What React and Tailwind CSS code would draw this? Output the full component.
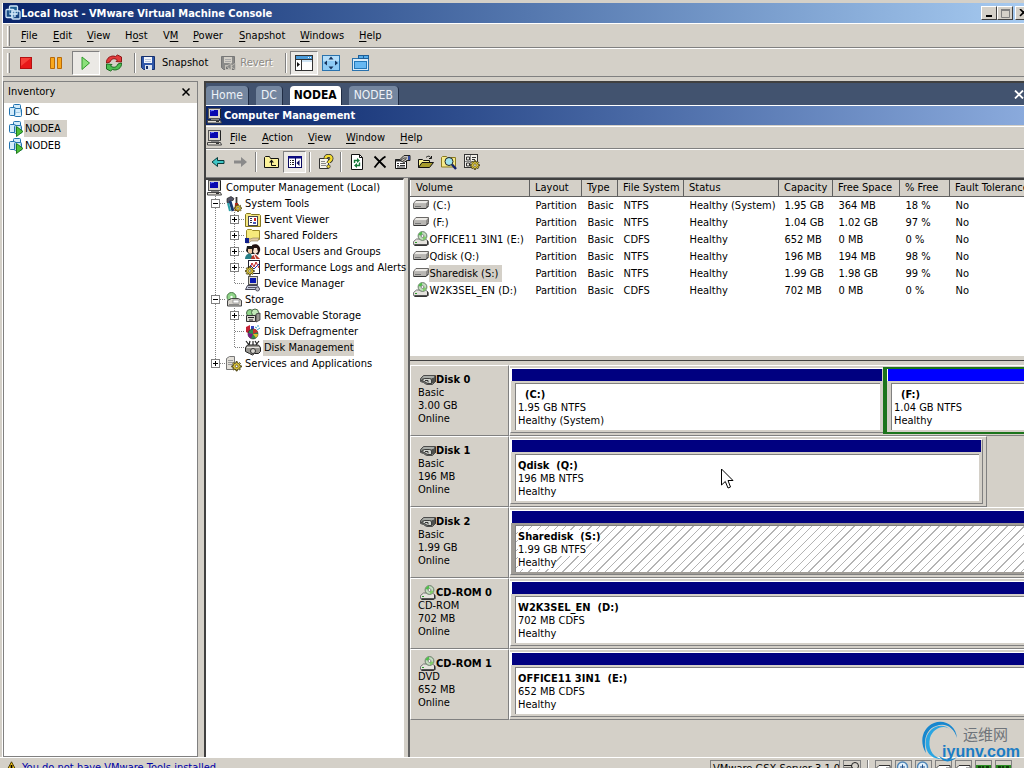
import React from "react";

const underline = (label, index) => (
  <>
    {label.slice(0, index)}
    <span className="underline underline-offset-2">{label[index]}</span>
    {label.slice(index + 1)}
  </>
);

function MenuBar({ items, className }) {
  return (
    <nav className={"flex items-center " + className}>
      {items.map(([label, index, width]) => (
        <button key={label} type="button" className={"whitespace-nowrap text-left " + width}>
          {underline(label, index)}
        </button>
      ))}
    </nav>
  );
}

function Icon({ children, w = 16, h = 16, className = "" }) {
  return (
    <svg width={w} height={h} viewBox={`0 0 ${w} ${h}`} className={"shrink-0 " + className} aria-hidden="true">
      {children}
    </svg>
  );
}

/* ---------- icons ---------- */

const VmLogo = () => (
  <Icon>
    <g fill="#1f5f93" stroke="#cfe6f8" strokeWidth="1.3">
      <rect x="4.5" y="1" width="8" height="8" rx="1" />
      <rect x="1" y="4.5" width="8" height="8" rx="1" fillOpacity=".7" />
      <rect x="7" y="6" width="8" height="8" rx="1" fillOpacity=".5" />
      <path d="M4.5 9h8M7 4.500v8M10 6v6" fill="none" />
    </g>
  </Icon>
);

const VmIcon = ({ on }) => (
  <Icon>
    <g fill="#d4ecfb" stroke="#2273b0">
      <rect x="5.500" y=".5" width="7" height="8" rx="1" />
      <rect x="1.500" y="3.500" width="6" height="8" rx="1" />
      <rect x="6.500" y="4.500" width="7" height="8" rx="1" fillOpacity=".7" />
    </g>
    {on && <path d="M8.500 5.500L15 10.500L8.500 15.500Z" fill="#4fc03a" stroke="#1e7a1a" />}
  </Icon>
);

const Computer = () => (
  <Icon>
    <rect x="1.500" y=".5" width="12" height="10" fill="#d8d4cc" stroke="#555" />
    <rect x="3" y="2" width="8" height="6" fill="#0808b0" />
    <path d="M4 3.500V2.500h3" stroke="#6d7cff" fill="none" />
    <path d="M13.500 1v9" stroke="#222" />
    <path d="M4 11h8v1H4z" fill="#888" />
    <path d="M.5 12.500h13l1 2.500H.5z" fill="#e4e0d8" stroke="#444" />
    <path d="M9 13.500h3" stroke="#333" />
  </Icon>
);

const Floppy = ({ gray }) => (
  <Icon>
    <path d="M1.500 1.500h13v13h-11l-2-2z" fill={gray ? "#8a8a88" : "#2f56a8"} stroke={gray ? "#777" : "#16306c"} />
    <rect x="4" y="2" width="8" height="6" fill={gray ? "#d4d0c8" : "#f2f5fa"} />
    <path d="M5 4.500h6M5 6.500h6" stroke={gray ? "#aaa" : "#b9c6dd"} />
    <rect x="5" y="10" width="7" height="5" fill={gray ? "#c4c0b8" : "#dfe5ef"} />
    <rect x="6" y="11" width="2" height="3" fill={gray ? "#777" : "#16306c"} />
    {gray && <path d="M11 8v7L6.500 11.500zM15.500 8v7L11 11.500z" fill="#8c8c8a" stroke="#d4d0c8" strokeWidth=".6" />}
  </Icon>
);

const Reset = () => (
  <Icon w={18} h={18}>
    <path d="M1.500 9C1 4 6 .8 10.500 2.500L12.500 1L16.500 3v5l-5.500-.5L12.500 6C9 3.500 6 5 5 8Z" fill="#e23a3a" stroke="#8e1515" />
    <path d="M16.500 9C17 14 12 17.200 7.500 15.500L5.500 17L1.500 15v-5l5.500.5L5.500 12C9 14.500 12 13 13 10Z" fill="#4cbf52" stroke="#1c6b21" />
  </Icon>
);

const Sidebar = () => (
  <Icon w={18} h={18}>
    <rect x=".5" y="1.500" width="17" height="15" fill="#fff" stroke="#333" />
    <path d="M1 2h16v3H1z" fill="#4a9cdb" />
    <path d="M1 5.500h16M6.500 5.500v11" stroke="#333" />
    <path d="M7 6h10v2H7z" fill="#cfe4f4" />
    <path d="M2 8v5l3-2.500z" fill="#111" />
    <path d="M13 3.500h1M15 3.500h1" stroke="#fff" />
  </Icon>
);

const Expand = () => (
  <Icon w={18} h={16}>
    <rect x=".5" y=".5" width="17" height="15" fill="#8ecbf5" stroke="#2a72ad" />
    <path d="M1 1h16v5H1z" fill="#b5defa" />
    <path d="M9 1.500l2.500 3h-5zM9 14.500l2.500-3h-5zM2 8l3-2.500v5zM16 8l-3-2.500v5z" fill="#16325c" />
  </Icon>
);

const QuickSwitch = () => (
  <Icon w={18} h={16}>
    <rect x=".5" y="3.500" width="16" height="12" fill="#d7ebfa" stroke="#2a72ad" />
    <rect x="6.500" y=".5" width="5" height="3" fill="#55acea" stroke="#1e5f98" />
    <rect x="11.500" y=".5" width="5" height="3" fill="#55acea" stroke="#1e5f98" />
    <rect x="2.500" y="6.500" width="12" height="7" fill="#66b8f2" stroke="#2478b8" />
  </Icon>
);

const Arrow = ({ right }) => (
  <Icon>
    {right ? (
      <path d="M1 6.500h7V3l6 5l-6 5V9.500H1z" fill="#8a8a8a" />
    ) : (
      <path d="M14 6.500H7.500V3.500L2 8l5.500 4.500V9.500H14z" fill="#3fc6c6" stroke="#0b3b3b" />
    )}
  </Icon>
);

const FolderUp = () => (
  <Icon>
    <path d="M.5 13.500V3.500l1-1h4l1 2h8v9z" fill="#fdf39a" stroke="#111" />
    <path d="M5 8.500L7.500 5.500L10 8.500z" fill="#111" />
    <path d="M7.500 8v3.500H12" fill="none" stroke="#111" />
  </Icon>
);

const TreePane = () => (
  <Icon>
    <rect x="1.500" y="2.500" width="13" height="11" fill="#fff" stroke="#0a0a60" />
    <path d="M1 2h14v2.500H1z" fill="#0a0a80" />
    <path d="M8.500 4v9" stroke="#0a0a60" />
    <path d="M3 6.500h1M5 6.500h2M3 8.500h1M5 8.500h2M3 10.500h1M5 10.500h2" stroke="#222" />
    <path d="M12.500 6v6L9.500 9z" fill="#0a0a60" />
  </Icon>
);

const HelpDoc = () => (
  <Icon>
    <path d="M1.500 4.500h9v10h-9z" fill="#f6f4ec" stroke="#333" />
    <path d="M3 7.500h4M3 9.500h5M3 11.500h5" stroke="#888" />
    <path d="M7.500 4.500C7.500 1 13.500 1 13.500 4.500C13.500 7 10.500 7 10.500 9" fill="none" stroke="#333" strokeWidth="4" />
    <path d="M7.500 4.500C7.500 1 13.500 1 13.500 4.500C13.500 7 10.500 7 10.500 9" fill="none" stroke="#f4dc30" strokeWidth="2.400" />
    <circle cx="10.500" cy="12.500" r="1.700" fill="#f4dc30" stroke="#333" strokeWidth=".8" />
  </Icon>
);

const RefreshDoc = () => (
  <Icon>
    <path d="M2.500 .5h8l3 3v12h-11z" fill="#fff" stroke="#111" />
    <path d="M10.500 .5v3h3" fill="none" stroke="#111" />
    <path d="M5.500 9V6.500h3" fill="none" stroke="#167a3a" strokeWidth="1.400" />
    <path d="M8 4v5l3-2.500z" fill="#167a3a" />
    <path d="M10.500 8.500v3H8" fill="none" stroke="#167a3a" strokeWidth="1.400" />
    <path d="M8 9v5l-3-2.500z" fill="#167a3a" />
  </Icon>
);

const DeleteX = () => (
  <Icon>
    <path d="M2.500 2.500L13.500 13.500M13.500 2.500C9 5 6 9 2.500 13.500" stroke="#000" strokeWidth="1.800" fill="none" />
  </Icon>
);

const Properties = () => (
  <Icon>
    <path d="M.5 5.500h11v9H.5z" fill="#fff" stroke="#111" />
    <path d="M.5 5.500h11v2H.5z" fill="#333" />
    <path d="M2 9.500h2M5 9.500h5M2 11.500h2M5 11.500h5M2 13h8" stroke="#333" />
    <path d="M4.500 6l4.500-4.500h6v5h-3l-3 2z" fill="#c9c5bd" stroke="#222" />
    <path d="M6 6l3-2h3M8 7l3-2" stroke="#222" fill="none" strokeWidth=".8" />
    <path d="M13 2h2v4h-2z" fill="#334a9c" />
  </Icon>
);

const OpenFolder = () => (
  <Icon>
    <path d="M.5 13.500V5.500h4l1 1h6v2" fill="#f7ef90" stroke="#111" />
    <path d="M.5 13.500L4 8.500h11.500l-4 5z" fill="#a69b2c" stroke="#111" />
    <path d="M8 3.500c2-2 4-1.500 5 .5M13.500 2v2.500H11" stroke="#111" fill="none" />
  </Icon>
);

const FindFolder = () => (
  <Icon>
    <path d="M.5 13V3.500l1-1h4l1 1h8V13z" fill="#f5e98a" stroke="#8a7a20" />
    <circle cx="8" cy="7.500" r="4" fill="#9fe3ee" stroke="#222" />
    <path d="M11 10.500l4 4.500" stroke="#10206a" strokeWidth="2.400" />
  </Icon>
);

const gearPath = "M7 1h2v2l2 .8L12.500 2.500L14 4l-1.300 1.500l.8 2h2v2h-2l-.8 1.700L14 12.500L12.500 14L11 12.700L9 13.500v2H7v-2l-2-.8L3.500 14L2 12.500l1.300-1.300L2.500 9.500h-2v-2h2l.8-2L2 4l1.500-1.500L5 3.800L7 3z";
const Gear = () => (
  <>
    <path d={gearPath} fill="#d8c23a" stroke="#3a3208" strokeWidth="1.400" />
    <circle cx="8" cy="8.300" r="2" fill="#fff" stroke="#3a3208" />
  </>
);

const Settings = () => (
  <Icon>
    <rect x=".5" y=".5" width="13" height="13" fill="#f2f0ea" stroke="#333" />
    <path d="M2.500 3v3h3V3zM2.500 9v3h3V9zM8 3.500h4M8 5.500h3" fill="none" stroke="#333" />
    <path d="M6.500 1v12M1 7.500h12" stroke="#888" />
    <g transform="translate(6 6) scale(.62)"><Gear /></g>
  </Icon>
);

const SystemTools = () => (
  <Icon>
    <path d="M1 2.500l4-2 3 2-1 2H4v2H1z" fill="#556" stroke="#222" strokeWidth=".7" />
    <path d="M4 5l3 10" stroke="#16386f" strokeWidth="2.800" />
    <path d="M10.500 1v7" stroke="#333" strokeWidth="1.800" />
    <path d="M9 7h3l1 8H8.500z" fill="#b02818" />
    <path d="M2 7l2 8" stroke="#2aa0a8" strokeWidth="2" />
    <g transform="translate(8 8) scale(.5)"><Gear /></g>
  </Icon>
);

const EventViewer = () => (
  <Icon>
    <path d="M.5 14.500V2.500l1-1h4l1 1h8l1 1v11z" fill="#f5e882" stroke="#85771f" />
    <rect x="3.500" y="4.500" width="9" height="9" fill="#fff" stroke="#445" />
    <path d="M5 6.500h2M5 8.500h2M5 10.500h2" stroke="#335" />
    <path d="M9 6h2v3H9z" fill="#cc2222" /><path d="M8 10h3v2H8z" fill="#4558c0" />
  </Icon>
);

const SharedFolders = () => (
  <Icon>
    <path d="M1.500 11.500V2.500l1-1h4l1 1h7v9z" fill="#f6ea7c" stroke="#9a8a28" />
    <path d="M1 10l4 1 3-1h6l-1 3H6l-2 2H1z" fill="#e0c9a2" stroke="#86785a" strokeWidth=".6" />
    <rect x="0" y="10" width="4" height="5" fill="#10208c" />
  </Icon>
);

const Users = () => (
  <Icon>
    <path d="M2 2h6l2 3v5H4L1 7z" fill="#1b1b1b" />
    <path d="M3 5h4v4l-2 1-2-2z" fill="#f0c8a0" />
    <path d="M7 1c5-2 9 1 8 6l-2 4-5-3z" fill="#201010" />
    <path d="M9 4h3l1 4-3 2-2-2z" fill="#f7e4d0" />
    <path d="M0 15c0-4 3-6 6-5l2 5z" fill="#267e86" />
    <path d="M6 15c0-3 3-5 5-4l4 4z" fill="#b83828" />
    <path d="M9 11l2 4" stroke="#fff" />
  </Icon>
);

const PerfLogs = () => (
  <Icon>
    <rect x="3.500" y=".5" width="11" height="13" fill="#fff" stroke="#223" />
    <path d="M5 8l2-5 2 4 2-5 3 6" stroke="#c02020" fill="none" />
    <path d="M5 5l4 4 5-5" stroke="#2030b0" fill="none" />
    <g transform="translate(0 6) scale(.6)"><Gear /></g>
  </Icon>
);

const DeviceMgr = () => (
  <Icon>
    <rect x="3.500" y=".5" width="9" height="8" fill="#dcd8d0" stroke="#555" />
    <rect x="5" y="2" width="6" height="5" fill="#0a18b0" />
    <path d="M2.500 9.500h10l2 4H.5z" fill="#c8cce0" stroke="#445" />
    <path d="M3 11.500h8" stroke="#556" />
    <circle cx="12.500" cy="13" r="2" fill="#c4c4cc" stroke="#556" />
  </Icon>
);

const CdDrive = () => (
  <Icon>
    <path d="M.5 10.500l3-2.500h9l3 2.500v3H.5z" fill="#e4e2dd" stroke="#777" />
    <path d="M2 13.500h13.500l-2 1.500H1z" fill="#333" />
    <circle cx="9.500" cy="5" r="4.400" fill="#c4dcc0" stroke="#5c705c" strokeWidth=".9" />
    <path d="M9.500 5L5.500 4A4.200 4.200 0 0 1 9 .8z" fill="#4fbf48" />
    <path d="M9.500 5L13.500 6A4.200 4.200 0 0 1 10 9.200z" fill="#7fcf68" />
    <circle cx="9.500" cy="5" r="1.400" fill="#fff" stroke="#666" strokeWidth=".7" />
    <path d="M2 11.500h2" stroke="#2c9c2c" />
    <path d="M14.500 9.500v4" stroke="#333" />
  </Icon>
);

const Storage = () => (
  <Icon>
    <circle cx="5.500" cy="5" r="4.500" fill="#8fd488" stroke="#4b7a48" />
    <circle cx="5.500" cy="5" r="1.200" fill="#fff" />
    <path d="M1.500 8.500l4-2h7l3 2v5.500h-14z" fill="#d6d3cc" stroke="#444" />
    <rect x="7" y="8" width="6" height="3" fill="#fff" stroke="#777" strokeWidth=".6" />
    <path d="M3 12.500h10" stroke="#888" />
  </Icon>
);

const Removable = () => (
  <Icon>
    <circle cx="5" cy="5" r="3.500" fill="#8fd488" stroke="#4b6a48" />
    <circle cx="10" cy="4.500" r="3.500" fill="#c2e8b8" stroke="#4b6a48" />
    <path d="M1.500 7.500h9v6h-9z" fill="#dcd9d2" stroke="#333" />
    <path d="M11 6l4-1v7l-4 2z" fill="#9a9892" stroke="#333" strokeWidth=".8" />
    <path d="M3 9.500h6M4 12h4" stroke="#222" />
  </Icon>
);

const Defrag = () => (
  <Icon>
    <path d="M1 3l4-2v9l-4-2z" fill="#c42034" /><path d="M6 2h3v4H6z" fill="#3444c0" />
    <circle cx="8" cy="10" r="5" fill="#2e8c4c" stroke="#222" strokeWidth=".6" />
    <path d="M8 10L3 9A5 5 0 0 0 6 14.500z" fill="#7a1c84" />
    <path d="M8 10l5-2A5 5 0 0 0 8 5z" fill="#c6302c" />
    <path d="M8 10l3 4A5 5 0 0 0 13 10z" fill="#d8c02c" />
    <path d="M10 3l2 1M12 6l3-2M13 1v2" stroke="#3aa4c8" />
  </Icon>
);

const DiskMgmt = () => (
  <Icon>
    <path d="M1 1l3 4M5 1l-1 4M8 1v4M14 1l-3 4M10 1l2 3" stroke="#222" strokeWidth="1.200" />
    <path d="M.5 7.500l2-2.500h11l2 2.500v4l-2 2h-4l-2 1.500-3-1.500-4-2z" fill="#9a9892" stroke="#222" />
    <path d="M2 7.500h12" stroke="#e4e2de" />
    <circle cx="8" cy="11" r="2.500" fill="#d8d6d0" stroke="#333" />
  </Icon>
);

const Services = () => (
  <Icon>
    <path d="M.5 2.500l3-2h5v13h-8z" fill="#e2dfd8" stroke="#777" />
    <path d="M2 4.500h5M2 6.500h5M2 8.500h5" stroke="#999" />
    <g transform="translate(5.500 5) scale(.64)"><Gear /></g>
  </Icon>
);

const Volume = () => (
  <Icon h={10}>
    <path d="M.5 3.500L3 .5h12.500v5L13 8.500H.5z" fill="#8d8b88" stroke="#6a6866" />
    <path d="M1 3.500L3 1h12l-2 2.500z" fill="#eceae6" />
    <path d="M1 4h12v4H1z" fill="#b8b6b2" />
    <path d="M2 6.500h6" stroke="#777" />
    <path d="M1 8.500h12L15.500 6" stroke="#333" fill="none" />
  </Icon>
);

const HardDisk = () => (
  <Icon h={12}>
    <path d="M.5 4.500l3-3h12v6l-3 3h-6l-3-2-3-1z" fill="#7d807c" stroke="#4c4c4c" />
    <path d="M2 4l2-2h11l-2 2z" fill="#a9aca8" />
    <path d="M1.500 6.500l3-2h5l2 1v4h-4l-3-2z" fill="#d0d3ce" stroke="#222" strokeWidth=".8" />
    <path d="M5 6.500h3v2" stroke="#333" fill="none" />
    <path d="M13 4v5M15 2v6" stroke="#222" />
  </Icon>
);

/* ---------- outer window ---------- */

const caption = "flex h-[14px] w-4 shrink-0 items-center justify-center border border-t-white border-l-white border-r-[#404040] border-b-[#404040] bg-[#d4d0c8]";
const pressed = "border border-t-[#808080] border-l-[#808080] border-r-white border-b-white bg-[#ebe9e5]";

function TitleBar() {
  return (
    <header className="flex h-5 items-center overflow-hidden bg-linear-to-r from-[#0a246a] to-[#a6caf0] pl-0.5 text-white">
      <VmLogo />
      <h1 className="flex-1 font-bold whitespace-nowrap">Local host - VMware Virtual Machine Console</h1>
      <button type="button" aria-label="Minimize" className={caption}>
        <Icon w={9} h={8}><path d="M1 6h6v2H1z" fill="#000" /></Icon>
      </button>
      <button type="button" aria-label="Maximize" className={caption + " mr-0.5"}>
        <Icon w={9} h={9}><path d="M.5 1h8v7.500h-8z" fill="none" stroke="#808080" /><path d="M0 1h9" stroke="#808080" strokeWidth="2" /></Icon>
      </button>
      <button type="button" aria-label="Close" className={caption + " -mr-[7px]"}>
        <Icon w={9} h={8}><path d="M1 0l7 7M8 0L1 7" stroke="#000" strokeWidth="1.600" /></Icon>
      </button>
    </header>
  );
}

const outerMenu = [
  ["File", 0, "w-8"], ["Edit", 0, "w-[34px]"], ["View", 0, "w-[38px]"], ["Host", 1, "w-[38px]"], ["VM", 1, "w-[30px]"],
  ["Power", 0, "w-[46px]"], ["Snapshot", 0, "w-[61px]"], ["Windows", 0, "w-[59px]"], ["Help", 0, "w-10"],
];

const Grip = () => <span className="h-5 w-[3px] shrink-0 border-r border-l border-r-[#808080] border-l-white" />;
const Sep = ({ className = "" }) => <span className={"h-5 w-0.5 shrink-0 border-r border-l border-r-white border-l-[#808080] " + className} />;

function OuterToolbar() {
  const btn = "flex h-6 w-7 shrink-0 items-center justify-center";
  return (
    <div className="flex h-[29px] items-center border-t border-b border-t-white border-b-[#808080] pl-1">
      <Grip />
      <div className="flex items-center gap-0.5 pl-0.5">
        <button type="button" aria-label="Stop" className={btn}>
          <Icon w={12} h={12}><rect x=".5" y=".5" width="11" height="11" fill="#e81818" stroke="#b41010" /><path d="M1 1h10L1 9z" fill="#ff5a4c" fillOpacity=".6" /></Icon>
        </button>
        <button type="button" aria-label="Pause" className={btn}>
          <Icon w={12} h={12}><path d="M.5 .5h4v11h-4zM7.500 .5h4v11h-4z" fill="#f9a81c" stroke="#b86a08" /></Icon>
        </button>
        <button type="button" aria-label="Play" className={btn + " " + pressed}>
          <Icon w={12} h={14}><path d="M2 1v12.500L9.500 7z" fill="#8be07a" stroke="#2f9a2a" /></Icon>
        </button>
        <button type="button" aria-label="Reset" className="flex h-6 w-6 items-center justify-center"><Reset /></button>
      </div>
      <Sep className="ml-2" />
      <button type="button" className="flex items-center gap-1.5 pl-1"><Floppy />Snapshot</button>
      <button type="button" disabled className="ml-3 flex items-center gap-1 text-[#8c8984] [text-shadow:1px_1px_0_#fff]"><Floppy gray />Revert</button>
      <Sep className="ml-3" />
      <div className="flex items-center gap-1 pl-[3px]">
        <button type="button" aria-label="Inventory" className={btn + " " + pressed}><Sidebar /></button>
        <button type="button" aria-label="Full screen" className="mr-2 flex h-6 items-center"><Expand /></button>
        <button type="button" aria-label="Quick switch" className="flex h-6 items-center"><QuickSwitch /></button>
      </div>
    </div>
  );
}

function Inventory() {
  return (
    <aside className="flex w-[195px] shrink-0 flex-col border border-[#808080] bg-white">
      <div className="flex h-[21px] items-center justify-between bg-[#d4d0c8] pr-[7px] pb-0.5 pl-1">
        <h2>Inventory</h2>
        <button type="button" aria-label="Close inventory"><Icon w={8} h={8}><path d="M.5 .5l7 7M7.500 .5l-7 7" stroke="#000" strokeWidth="1.500" /></Icon></button>
      </div>
      <ul>
        {[["DC", false], ["NODEA", true], ["NODEB", true]].map(([name, on]) => (
          <li key={name} className="flex h-[17px] items-center pl-1">
            <VmIcon on={on} />
            <span className={"h-full pr-1.5 pl-px leading-[17px] " + (name === "NODEA" ? "bg-[#d4d0c8]" : "")}>{name}</span>
          </li>
        ))}
      </ul>
    </aside>
  );
}

function Tabs() {
  const tab = "h-[19px] rounded-t-sm border-r border-r-[#1f2c44] text-[12px] leading-[17px] ";
  return (
    <div className="flex h-[22px] items-end gap-[7px] bg-[#42536f]">
      {["Home", "DC", "NODEA", "NODEB"].map((name) => (
        <button key={name} type="button" className={tab + (name === "NODEA" ? "bg-white px-1 font-bold text-black" : "bg-[#74869f] px-[5px] text-[#eef2f8]")}>
          {name}
        </button>
      ))}
      <button type="button" aria-label="Close tab" className="ml-auto self-center">
        <Icon w={10} h={9}><path d="M1 .5l8 8M9 .5l-8 8" stroke="#fff" strokeWidth="1.800" /></Icon>
      </button>
    </div>
  );
}

/* ---------- computer management ---------- */

const innerMenu = [
  ["File", 0, "w-8"], ["Action", 0, "w-[46px]"], ["View", 0, "w-[38px]"], ["Window", 0, "w-[54px]"], ["Help", 0, "w-8"],
];

const innerTools = [
  ["Back", <Arrow />], ["Forward", <Arrow right />], null,
  ["Up one level", <FolderUp />], ["Console tree", <TreePane />], null,
  ["Help topics", <HelpDoc />], null,
  ["Refresh", <RefreshDoc />], ["Delete", <DeleteX />], ["Properties", <Properties />],
  ["Open", <OpenFolder />], ["Find", <FindFolder />], ["Settings", <Settings />],
];

function InnerToolbar() {
  return (
    <div className="flex h-[26px] shrink-0 items-center border-t border-t-white pb-px">
      {innerTools.map((tool, i) =>
        tool ? (
          <button key={tool[0]} type="button" aria-label={tool[0]} className={"flex h-[22px] w-[23px] shrink-0 items-center justify-center " + (tool[0] === "Console tree" ? pressed : "")}>
            {tool[1]}
          </button>
        ) : (
          <Sep key={i} className="mx-[3px]" />
        )
      )}
    </div>
  );
}

/* Each guide cell is [kind, box]: "line" branches, "last" ends, "pass" runs straight through. */
const tree = [
  ["Computer Management (Local)", Computer, []],
  ["System Tools", SystemTools, [["line", "-"]]],
  ["Event Viewer", EventViewer, [["pass"], ["line", "+"]]],
  ["Shared Folders", SharedFolders, [["pass"], ["line", "+"]]],
  ["Local Users and Groups", Users, [["pass"], ["line", "+"]]],
  ["Performance Logs and Alerts", PerfLogs, [["pass"], ["line", "+"]]],
  ["Device Manager", DeviceMgr, [["pass"], ["last"]]],
  ["Storage", Storage, [["line", "-"]]],
  ["Removable Storage", Removable, [["pass"], ["line", "+"]]],
  ["Disk Defragmenter", Defrag, [["pass"], ["line"]]],
  ["Disk Management", DiskMgmt, [["pass"], ["last"]]],
  ["Services and Applications", Services, [["last", "+"]]],
];

function Guide({ kind, box }) {
  return (
    <Icon w={19}>
      <g stroke="#808080" strokeDasharray="1 1" shapeRendering="crispEdges">
        <path d={kind === "last" ? "M8.500 0v8" : "M8.500 0v16"} />
        {kind !== "pass" && <path d="M9 7.500h9" />}
      </g>
      {box && (
        <g shapeRendering="crispEdges">
          <rect x="4.500" y="3.500" width="8" height="8" fill="#fff" stroke="#808080" />
          <path d="M6 7.500h5" stroke="#000" />
          {box === "+" && <path d="M8.500 5v5" stroke="#000" />}
        </g>
      )}
    </Icon>
  );
}

function Tree() {
  return (
    <ul className="w-[198px] shrink-0 border-t-2 border-t-[#404040] border-r border-r-white bg-white pl-px">
      {tree.map(([label, NodeIcon, guides]) => (
        <li key={label} className="flex h-4 items-center whitespace-nowrap">
          {guides.map(([kind, box], i) => <Guide key={i} kind={kind} box={box} />)}
          <NodeIcon />
          <span className={"ml-0.5 h-full pl-px leading-4 " + (label === "Disk Management" ? "bg-[#d4d0c8]" : "")}>{label}</span>
        </li>
      ))}
    </ul>
  );
}

const columns = [
  ["Volume", "w-[119px]"], ["Layout", "w-[52px]"], ["Type", "w-9"], ["File System", "w-[66px]"], ["Status", "w-[95px]"],
  ["Capacity", "w-[54px]"], ["Free Space", "w-[67px]"], ["% Free", "w-[50px]"], ["Fault Tolerance", "w-24"],
];

const volumes = [
  [Volume, "\u00a0(C:)", "NTFS", "Healthy (System)", "1.95 GB", "364 MB", "18 %"],
  [Volume, "\u00a0(F:)", "NTFS", "Healthy", "1.04 GB", "1.02 GB", "97 %"],
  [CdDrive, "OFFICE11 3IN1 (E:)", "CDFS", "Healthy", "652 MB", "0 MB", "0 %"],
  [Volume, "Qdisk (Q:)", "NTFS", "Healthy", "196 MB", "194 MB", "98 %"],
  [Volume, "Sharedisk (S:)", "NTFS", "Healthy", "1.99 GB", "1.98 GB", "99 %"],
  [CdDrive, "W2K3SEL_EN (D:)", "CDFS", "Healthy", "702 MB", "0 MB", "0 %"],
];

function VolumeTable() {
  return (
    <div className="h-[178px] shrink-0 overflow-hidden border-t-2 border-t-[#404040] bg-white">
      <table className="w-[635px] table-fixed border-collapse">
        <thead>
          <tr className="h-4">
            {columns.map(([name, width]) => (
              <th key={name} scope="col" className={"border-r border-b border-l border-r-[#606060] border-b-[#606060] border-l-white bg-[#d4d0c8] p-0 pl-[5px] text-left font-normal whitespace-nowrap " + width}>
                {name}
              </th>
            ))}
          </tr>
        </thead>
        <tbody>
          {volumes.map(([VolIcon, name, ...rest]) => (
            <tr key={name} className="h-[17px] whitespace-nowrap">
              <td className="p-0 pl-0.5">
                <div className="flex h-[17px] items-center">
                  <VolIcon />
                  <span className={"h-full pr-1 pl-px leading-[17px] " + (name.startsWith("Share") ? "bg-[#d4d0c8]" : "")}>{name}</span>
                </div>
              </td>
              {["Partition", "Basic", ...rest, "No"].map((value, i) => (
                <td key={i} className="p-0 pl-[6px]">{value}</td>
              ))}
            </tr>
          ))}
        </tbody>
      </table>
    </div>
  );
}

const disks = [
  ["Disk 0", "Basic", "3.00 GB", HardDisk, [["\u00a0\u00a0(C:)", "1.95 GB NTFS", "Healthy (System)", "w-[373px]"], ["\u00a0\u00a0(F:)", "1.04 GB NTFS", "Healthy", "flex-1", "extended"]]],
  ["Disk 1", "Basic", "196 MB", HardDisk, [["Qdisk\u00a0 (Q:)", "196 MB NTFS", "Healthy", "w-[473px]", "short"]]],
  ["Disk 2", "Basic", "1.99 GB", HardDisk, [["Sharedisk\u00a0 (S:)", "1.99 GB NTFS", "Healthy", "flex-1", "selected"]]],
  ["CD-ROM 0", "CD-ROM", "702 MB", CdDrive, [["W2K3SEL_EN\u00a0 (D:)", "702 MB CDFS", "Healthy", "flex-1"]]],
  ["CD-ROM 1", "DVD", "652 MB", CdDrive, [["OFFICE11 3IN1\u00a0 (E:)", "652 MB CDFS", "Healthy", "flex-1"]]],
];

function Partition({ data: [name, size, status, width, kind] }) {
  const extended = kind === "extended";
  const selected = kind === "selected";
  const open = width === "flex-1";
  const line = "w-fit whitespace-nowrap" + (selected ? " bg-white" : "");
  return (
    <div className={"flex shrink-0 flex-col " + width + (extended ? " my-px border-y-2 border-l-4 border-[#1c741c]" : " my-0.5 border-y border-l border-t-white border-b-[#808080] border-l-white") + (kind === "short" ? " border-r border-r-[#808080]" : "")}>
      <div className={"h-3 shrink-0 border-l border-l-white " + (extended ? "bg-[#0000ff]" : "bg-[#000080]") + (open ? "" : " mr-px")} />
      <div className={"flex flex-1 pt-0.5 pb-0.5 pl-1 " + (selected ? "bg-[#a09c96]" : "") + (open ? "" : " pr-[3px]")}>
        <div className={"flex-1 border-t border-l border-[#808080] pt-1 pl-0.5 leading-[13px] " + (selected ? "bg-[repeating-linear-gradient(135deg,#fff_0_5px,#b4b4b4_5px_6px)]" : "bg-white")}>
          <h3 className={"font-bold " + line}>{name}</h3>
          <p className={line}>{size}</p>
          <p className={line}>{status}</p>
        </div>
      </div>
    </div>
  );
}

function DiskView() {
  return (
    <div className="flex-1 overflow-hidden pt-1">
      {disks.map(([name, type, size, DiskIcon, parts]) => (
        <section key={name} className="flex h-[71px]">
          <div className="w-[99px] shrink-0 border border-t-white border-r-[#808080] border-b-[#808080] border-l-white pt-[7px] pl-[7px] leading-[13px]">
            <h2 className="flex h-[13px] items-center pl-0.5 font-bold whitespace-nowrap"><DiskIcon />{name}</h2>
            <p>{type}</p>
            <p>{size}</p>
            <p>Online</p>
          </div>
          <div className={"flex min-w-0 border-t border-b border-l border-t-white border-b-[#808080] border-l-white " + (parts[0][4] === "short" ? "border-r border-r-[#808080] pr-[3px]" : "flex-1")}>
            {parts.map((part) => <Partition key={part[0]} data={part} />)}
          </div>
        </section>
      ))}
    </div>
  );
}

function ComputerManagement() {
  return (
    <>
      <header className="flex h-5 shrink-0 items-center border-t border-t-white bg-linear-to-r from-[#0a246a] to-[#8aaadc] pl-px text-white">
        <Computer />
        <h2 className="pl-px font-bold">Computer Management</h2>
      </header>
      <div className="mt-px flex h-[23px] shrink-0 items-center border-t border-b border-t-white border-b-[#808080] pl-px">
        <Computer />
        <MenuBar items={innerMenu} className="pl-[7px]" />
      </div>
      <InnerToolbar />
      <div className="mt-0.5 flex min-h-0 flex-1 border-t border-t-[#808080]">
        <Tree />
        <div className="ml-1 flex min-w-0 flex-1 flex-col border-l-2 border-l-[#606060]">
          <VolumeTable />
          <div className="h-[5px] shrink-0 border-b border-b-[#404040] bg-[#d4d0c8]" />
          <DiskView />
        </div>
      </div>
    </>
  );
}

/* ---------- status bar and overlays ---------- */

const cell = "h-5 shrink-0 border border-[#808080] border-b-0 ";

const Drive = () => <Icon w={15} h={12}><path d="M1 6.500l2-2h11v8H1z" fill="#fff" stroke="#333" /><path d="M10 7h3" stroke="#555" /></Icon>;
const Lens = () => <Icon w={15} h={14}><circle cx="6.500" cy="6" r="5" fill="#e2f0fa" stroke="#4f86b8" strokeWidth="1.400" /><path d="M6.500 3.500v5M4 6h5" stroke="#20508c" /><path d="M10 10l3 3" stroke="#345" strokeWidth="2" /></Icon>;
const Board = () => <Icon w={15} h={12}><path d="M0 4h15v8H0z" fill="#2a8a22" /><path d="M2 6h3M6 6h2M10 6h3M2 9h5M10 9h3" stroke="#103c0c" strokeWidth="2" /></Icon>;

function StatusBar() {
  return (
    <footer className="flex h-[11px] shrink-0 items-start overflow-hidden border-t border-t-white">
      <Icon w={13} h={12} className="mt-[3px] ml-[5px]"><path d="M6.500 .8L12.500 12H.5z" fill="#f5c518" stroke="#4a3a00" /><path d="M6.500 4v4" stroke="#000" strokeWidth="1.800" /></Icon>
      <p className="mt-[3px] ml-1 leading-[13px] whitespace-nowrap text-[#0000a8]">You do not have VMware Tools installed.</p>
      <div className="mt-0.5 mr-3 ml-auto flex gap-[3px]">
        <span className={cell + "w-[130px] overflow-hidden pt-px pl-0.5 leading-[13px] whitespace-nowrap"}>VMware GSX Server 3.1.0</span>
        <span className={cell + "w-[18px]"}><Icon w={16} h={12}><circle cx="11" cy="5" r="3.500" fill="none" stroke="#222" /><path d="M0 4.500h8M0 7h9" stroke="#222" /></Icon></span>
        <Sep className="mx-[3px]" />
        <span className={cell + "w-[17px]"}><Drive /></span>
        <span className={cell + "w-[17px]"}><Lens /></span>
        <span className={cell + "w-[17px]"}><Lens /></span>
        <span className={cell + "w-[17px]"}><Drive /></span>
        <span className={cell + "w-[17px]"}><Drive /></span>
        <span className={cell + "w-[17px]"}><Board /></span>
        <span className={cell + "w-[17px]"}><Board /></span>
      </div>
    </footer>
  );
}

function Watermark() {
  return (
    <div className="absolute right-1 bottom-1.5 h-[42px] w-[99px]">
      <svg width="42" height="42" viewBox="0 0 42 42" className="absolute top-0 left-0" aria-hidden="true">
        <path d="M36 18C35 6 24 -1 13 3C1 8 -2 22 5 33C2 21 5 9 15 6C25 2 33 8 36 18Z" fill="#1787cf" />
        <path d="M31 11C24 3 12 8 9 18C7 27 10 36 20 39C9 39 3 30 5 19C8 6 22 1 31 11Z" fill="#2aa5e2" />
        <path d="M18 36C25 41 31 40 36 37C30 43 22 43 18 36Z" fill="#1787cf" />
      </svg>
      <div className="flex flex-col items-end pt-1.5 leading-4">
        <div className="pr-3 font-['Noto_Sans_CJK_SC',sans-serif] text-[15px] text-[#6f747a]">运维网</div>
        <div className="font-['Liberation_Sans',sans-serif] text-base leading-5 font-bold text-[#1b7cc4]">iyunv.com</div>
      </div>
    </div>
  );
}

export default function App() {
  return (
    <div className="relative flex h-screen flex-col overflow-hidden bg-[#d4d0c8] pt-[3px] font-['DejaVu_Sans_Condensed','DejaVu_Sans',sans-serif] text-[11px] leading-[13px] text-black">
      <div className="ml-0.5 flex min-h-0 flex-1 flex-col border-l border-l-white">
        <TitleBar />
        <div className="flex h-[25px] shrink-0 items-center border-t border-b border-t-white border-b-[#808080] pl-1">
          <Grip />
          <MenuBar items={outerMenu} className="pl-[11px]" />
        </div>
        <OuterToolbar />
        <div className="mt-1 flex min-h-0 flex-1">
          <Inventory />
          <main className="ml-1.5 flex min-w-0 flex-1 flex-col border-t-2 border-l-2 border-[#404040]">
            <Tabs />
            <ComputerManagement />
          </main>
        </div>
      </div>
      <StatusBar />
      <Watermark />
      <svg width="14" height="22" viewBox="0 0 14 22" className="absolute top-[61%] left-[70.4%]" aria-hidden="true">
        <path d="M.5 1v16l3.800-3.500L7 20l2.500-1L7 12.500h5z" fill="#fff" stroke="#000" />
      </svg>
    </div>
  );
}
